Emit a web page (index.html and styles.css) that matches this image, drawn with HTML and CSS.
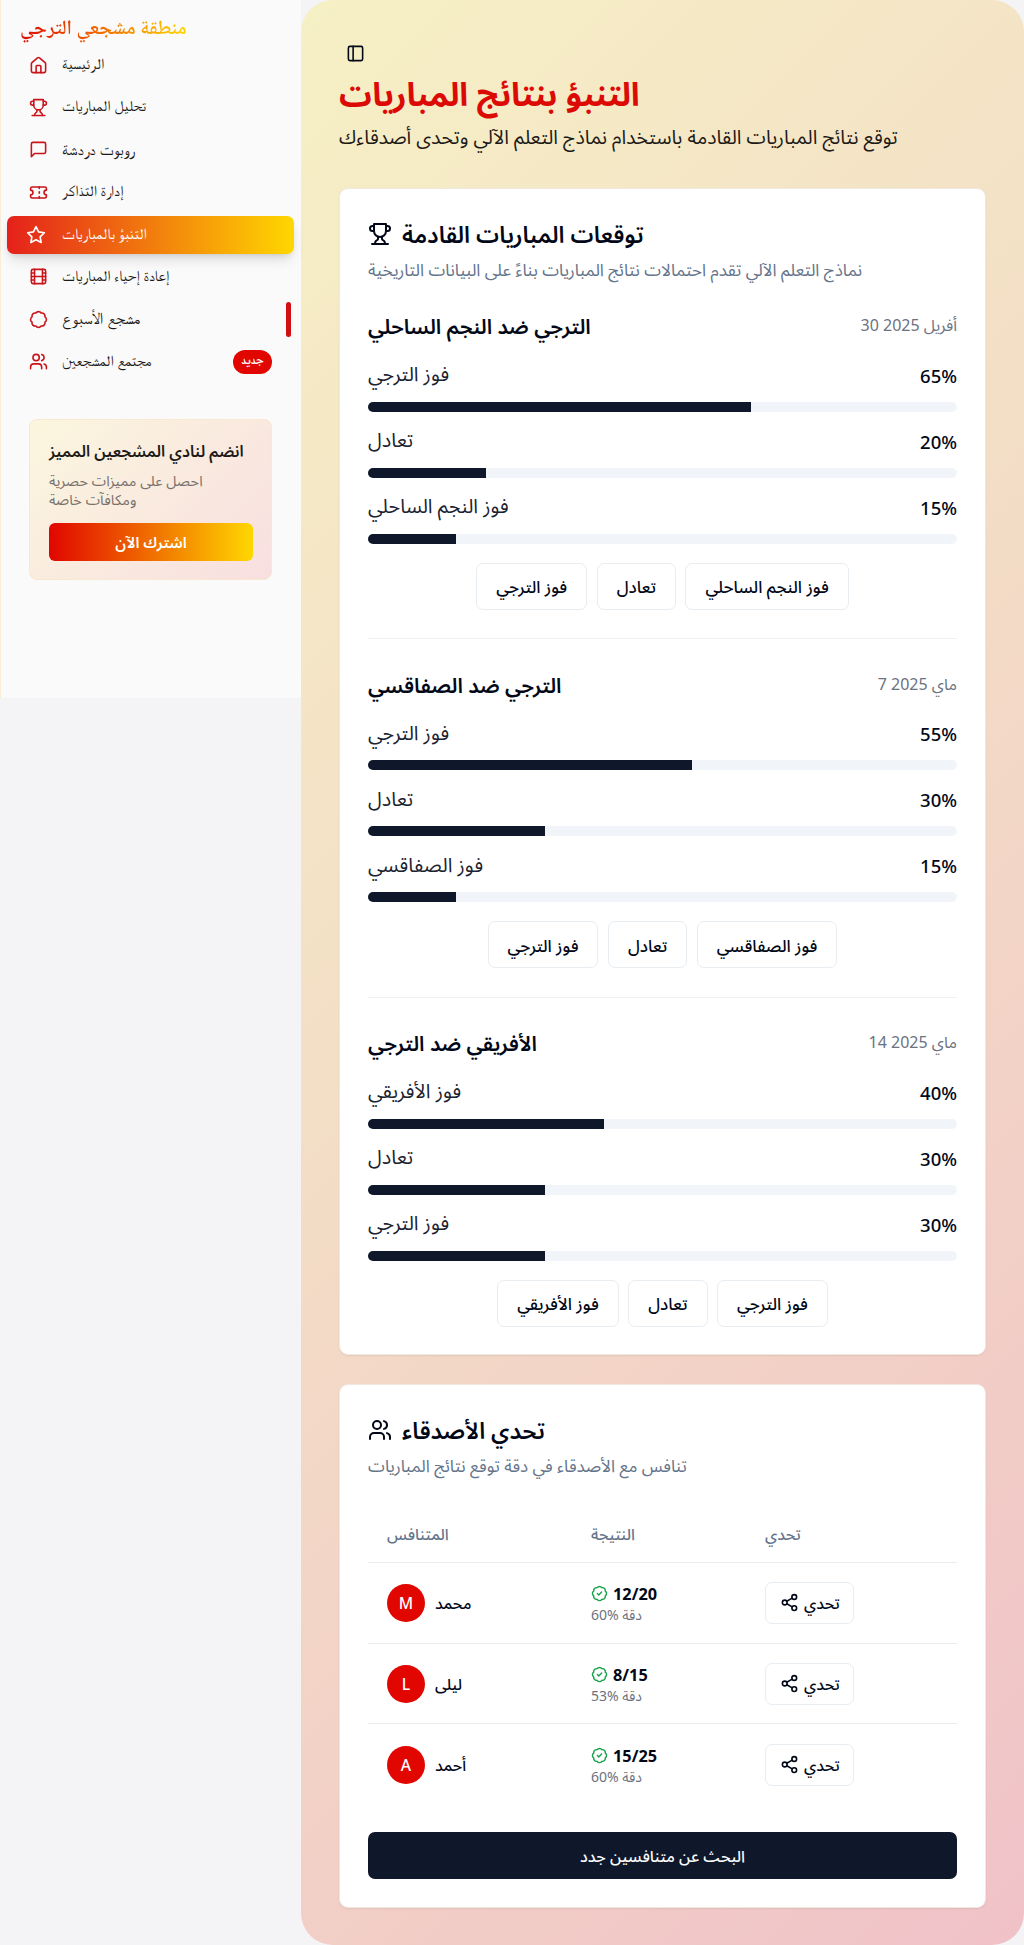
FILE: index.html
```html
<!DOCTYPE html>
<html lang="ar" dir="ltr">
<head>
<meta charset="utf-8">
<title>التنبؤ بنتائج المباريات</title>
<link rel="stylesheet" href="styles.css">
</head>
<body>
<svg class="sprite" aria-hidden="true">
  <symbol id="home" viewBox="0 0 24 24"><path d="M15 21v-8a1 1 0 0 0-1-1h-4a1 1 0 0 0-1 1v8"/><path d="M3 10a2 2 0 0 1 .709-1.528l7-5.999a2 2 0 0 1 2.582 0l7 5.999A2 2 0 0 1 21 10v9a2 2 0 0 1-2 2H5a2 2 0 0 1-2-2z"/></symbol>
  <symbol id="trophy" viewBox="0 0 24 24"><path d="M6 9H4.500a2.500 2.500 0 0 1 0-5H6"/><path d="M18 9h1.500a2.500 2.500 0 0 0 0-5H18"/><path d="M4 22h16"/><path d="M10 14.660V17c0 .55-.47.98-.97 1.210C7.850 18.750 7 20.240 7 22"/><path d="M14 14.660V17c0 .55.47.98.97 1.210C16.150 18.750 17 20.240 17 22"/><path d="M18 2H6v7a6 6 0 0 0 12 0V2Z"/></symbol>
  <symbol id="chat" viewBox="0 0 24 24"><path d="M21 15a2 2 0 0 1-2 2H7l-4 4V5a2 2 0 0 1 2-2h14a2 2 0 0 1 2 2z"/></symbol>
  <symbol id="ticket" viewBox="0 0 24 24"><path d="M2 9a3 3 0 0 1 0 6v2a2 2 0 0 0 2 2h16a2 2 0 0 0 2-2v-2a3 3 0 0 1 0-6V7a2 2 0 0 0-2-2H4a2 2 0 0 0-2 2Z"/><path d="M13 5v2"/><path d="M13 17v2"/><path d="M13 11v2"/></symbol>
  <symbol id="star" viewBox="0 0 24 24"><path d="m12 2 3.090 6.260L22 9.270l-5 4.870 1.180 6.880L12 17.770l-6.180 3.250L7 14.140 2 9.270l6.910-1.010z"/></symbol>
  <symbol id="film" viewBox="0 0 24 24"><rect width="18" height="18" x="3" y="3" rx="2"/><path d="M7 3v18M3 7.500h4M3 12h18M3 16.500h4M17 3v18M17 7.500h4M17 16.500h4"/></symbol>
  <symbol id="badge" viewBox="0 0 24 24"><path d="M3.850 8.620a4 4 0 0 1 4.780-4.770 4 4 0 0 1 6.740 0 4 4 0 0 1 4.780 4.780 4 4 0 0 1 0 6.740 4 4 0 0 1-4.770 4.780 4 4 0 0 1-6.750 0 4 4 0 0 1-4.780-4.770 4 4 0 0 1 0-6.760Z"/></symbol>
  <symbol id="badge-check" viewBox="0 0 24 24"><path d="M3.850 8.620a4 4 0 0 1 4.780-4.770 4 4 0 0 1 6.740 0 4 4 0 0 1 4.780 4.780 4 4 0 0 1 0 6.740 4 4 0 0 1-4.770 4.780 4 4 0 0 1-6.750 0 4 4 0 0 1-4.780-4.770 4 4 0 0 1 0-6.760Z"/><path d="m9 12 2 2 4-4"/></symbol>
  <symbol id="users" viewBox="0 0 24 24"><path d="M16 21v-2a4 4 0 0 0-4-4H6a4 4 0 0 0-4 4v2"/><circle cx="9" cy="7" r="4"/><path d="M22 21v-2a4 4 0 0 0-3-3.870"/><path d="M16 3.130a4 4 0 0 1 0 7.750"/></symbol>
  <symbol id="share" viewBox="0 0 24 24"><circle cx="18" cy="5" r="3"/><circle cx="6" cy="12" r="3"/><circle cx="18" cy="19" r="3"/><path d="m8.590 13.510 6.830 3.980M15.410 6.510l-6.820 3.980"/></symbol>
  <symbol id="panel" viewBox="0 0 24 24"><rect width="18" height="18" x="3" y="3" rx="2"/><path d="M9 3v18"/></symbol>
</svg>
<div class="layout">
  <aside class="sidebar">
    <div class="brand"><span>منطقة مشجعي الترجي</span></div>
    <nav class="nav">
      <a class="nav-item"><svg class="icon"><use href="#home"/></svg><span>الرئيسية</span></a>
      <a class="nav-item"><svg class="icon"><use href="#trophy"/></svg><span>تحليل المباريات</span></a>
      <a class="nav-item"><svg class="icon"><use href="#chat"/></svg><span class="wide">روبوت دردشة</span></a>
      <a class="nav-item"><svg class="icon"><use href="#ticket"/></svg><span>إدارة التذاكر</span></a>
      <a class="nav-item active"><svg class="icon"><use href="#star"/></svg><span>التنبؤ بالمباريات</span></a>
      <a class="nav-item"><svg class="icon"><use href="#film"/></svg><span>إعادة إحياء المباريات</span></a>
      <a class="nav-item"><svg class="icon"><use href="#badge"/></svg><span class="wide">مشجع الأسبوع</span><i class="marker"></i></a>
      <a class="nav-item"><svg class="icon"><use href="#users"/></svg><span>مجتمع المشجعين</span><b class="tag">جديد</b></a>
    </nav>
    <section class="promo">
      <h3>انضم لنادي المشجعين المميز</h3>
      <p>احصل على مميزات حصرية<br>ومكافآت خاصة</p>
      <button class="promo-btn">اشترك الآن</button>
    </section>
  </aside>
  <main class="main">
    <svg class="icon toggle"><use href="#panel"/></svg>
    <h1>التنبؤ بنتائج المباريات</h1>
    <p class="lead">توقع نتائج المباريات القادمة باستخدام نماذج التعلم الآلي وتحدى أصدقاءك</p>

    <section class="card matches">
      <h2><svg class="icon"><use href="#trophy"/></svg><span>توقعات المباريات القادمة</span></h2>
      <p class="desc">نماذج التعلم الآلي تقدم احتمالات نتائج المباريات بناءً على البيانات التاريخية</p>

      <article class="match">
        <header><h3>الترجي ضد النجم الساحلي</h3><time>30 أفريل 2025</time></header>
        <div class="row"><span>فوز الترجي</span><b>65%</b></div><div class="bar"><i style="width:65%"></i></div>
        <div class="row"><span>تعادل</span><b>20%</b></div><div class="bar"><i style="width:20%"></i></div>
        <div class="row"><span>فوز النجم الساحلي</span><b>15%</b></div><div class="bar"><i style="width:15%"></i></div>
        <div class="picks"><button>فوز الترجي</button><button>تعادل</button><button>فوز النجم الساحلي</button></div>
      </article>
      <article class="match">
        <header><h3>الترجي ضد الصفاقسي</h3><time>7 ماي 2025</time></header>
        <div class="row"><span>فوز الترجي</span><b>55%</b></div><div class="bar"><i style="width:55%"></i></div>
        <div class="row"><span>تعادل</span><b>30%</b></div><div class="bar"><i style="width:30%"></i></div>
        <div class="row"><span>فوز الصفاقسي</span><b>15%</b></div><div class="bar"><i style="width:15%"></i></div>
        <div class="picks"><button>فوز الترجي</button><button>تعادل</button><button>فوز الصفاقسي</button></div>
      </article>
      <article class="match">
        <header><h3>الأفريقي ضد الترجي</h3><time>14 ماي 2025</time></header>
        <div class="row"><span>فوز الأفريقي</span><b>40%</b></div><div class="bar"><i style="width:40%"></i></div>
        <div class="row"><span>تعادل</span><b>30%</b></div><div class="bar"><i style="width:30%"></i></div>
        <div class="row"><span>فوز الترجي</span><b>30%</b></div><div class="bar"><i style="width:30%"></i></div>
        <div class="picks"><button>فوز الأفريقي</button><button>تعادل</button><button>فوز الترجي</button></div>
      </article>
    </section>

    <section class="card friends">
      <h2><svg class="icon"><use href="#users"/></svg><span>تحدي الأصدقاء</span></h2>
      <p class="desc">تنافس مع الأصدقاء في دقة توقع نتائج المباريات</p>
      <div class="table">
        <div class="tr th"><span>المتنافس</span><span>النتيجة</span><span>تحدي</span></div>
        <div class="tr"><div class="who"><i class="avatar">M</i><span>محمد</span></div><div class="score"><div><svg class="icon"><use href="#badge-check"/></svg><b>12/20</b></div><small>60% دقة</small></div><div><button><svg class="icon"><use href="#share"/></svg><span>تحدي</span></button></div></div>
        <div class="tr"><div class="who"><i class="avatar">L</i><span>ليلى</span></div><div class="score"><div><svg class="icon"><use href="#badge-check"/></svg><b>8/15</b></div><small>53% دقة</small></div><div><button><svg class="icon"><use href="#share"/></svg><span>تحدي</span></button></div></div>
        <div class="tr"><div class="who"><i class="avatar">A</i><span>أحمد</span></div><div class="score"><div><svg class="icon"><use href="#badge-check"/></svg><b>15/25</b></div><small>60% دقة</small></div><div><button><svg class="icon"><use href="#share"/></svg><span>تحدي</span></button></div></div>
      </div>
      <button class="primary">البحث عن متنافسين جدد</button>
    </section>
  </main>
</div>
</body>
</html>
```
FILE: styles.css
```css
* { box-sizing: border-box; }
body { margin: 0; background: #f4f4f6; font-family: "Noto Sans", "Noto Sans Arabic", "DejaVu Sans", sans-serif; color: #020817; }
h1, h2, h3, p { margin: 0; white-space: nowrap; }
button { font: inherit; color: inherit; white-space: nowrap; }
b { font-weight: inherit; }
span, time { white-space: nowrap; }
.sprite { display: none; }
.icon { flex: none; width: 19px; height: 19px; fill: none; stroke: currentColor; stroke-width: 2; stroke-linecap: round; stroke-linejoin: round; }
.layout { display: flex; align-items: flex-start; height: 1945px; }

.sidebar { width: 301px; height: 698px; background: #fafafa; border-left: 1px solid #faeed8; flex: none; color: #1c1917; }
.brand { height: 44px; padding: 14px 0 0 19px; font: 600 20.200px/32px "Noto Naskh Arabic", "DejaVu Sans", serif; }
.brand span { background: linear-gradient(90deg, #e10600, #ffd700); background-clip: text; -webkit-background-clip: text; color: transparent; }
.nav { padding: 2px 7px 0 6px; display: grid; gap: 4.400px; font: 400 15.400px/38px "FreeSerif", "Noto Naskh Arabic", "DejaVu Sans", serif; }
.nav .wide { font-size: 16.800px; }
.nav-item { display: flex; align-items: center; height: 38px; padding-left: 22px; gap: 14px; position: relative; }
.nav-item .icon { color: #c8151b; }
.active { background: linear-gradient(90deg, #e4211b, #ffd700); border-radius: 7px; color: #fff; box-shadow: 0 8px 14px -3px #0002, 0 3px 6px -3px #0002; padding-left: 19px; gap: 16px; }
.active .icon { color: #fff; width: 20px; height: 20px; }
.marker { position: absolute; right: 3px; top: 2px; width: 5px; height: 35px; border-radius: 3px; background: #d01012; }
.tag { margin-left: auto; margin-right: 22px; width: 39px; height: 24px; border-radius: 12px; background: #e10600; color: #fff; font-size: 13px; font-weight: 700; line-height: 22px; text-align: center; }
.promo { margin: 38px 29px 0 28px; height: 161px; border: 1px solid #f9e8cf; border-radius: 8px; background: linear-gradient(135deg, #fbf6de, #f8dfe0); padding: 17px 19px; }
.promo h3 { font-size: 15.900px; line-height: 28px; font-weight: 600; }
.promo p { font-size: 14.500px; line-height: 19px; color: #78716c; margin-top: 6px; }
.promo-btn { display: block; width: 204px; height: 38px; margin-top: 14px; border: 0; border-radius: 6px; background: linear-gradient(90deg, #e10600, #ffd700); color: #fff; font-size: 15.200px; font-weight: 600; padding: 3px 0 0; }

.main { flex: 1; height: 1945px; padding: 42px 38px 38px; border-radius: 32px; background: linear-gradient(135deg, #f6f0c5, #f3dfc6 40%, #f2d0c6 70%, #f0c2c8); }
.toggle { display: block; margin: 2px 0 0 7px; }
h1 { color: #dc0a05; font-size: 32.500px; line-height: 44px; margin-top: 9px; font-weight: 700; }
.lead { font-size: 19.500px; line-height: 32px; margin-top: 5px; color: #1c1917; }
.card { background: #fff; border-radius: 9px; border: 1px solid #efe9e2; box-shadow: 0 1px 2px #0001; padding: 28px 28px 0; }
.matches { margin-top: 35px; height: 1167px; }
.friends { margin-top: 29px; height: 524px; }
h2 { display: flex; align-items: center; gap: 10px; font-size: 23px; line-height: 34px; font-weight: 600; }
h2 .icon { width: 24px; height: 24px; }
.desc { font-size: 17px; line-height: 24px; color: #64748b; margin-top: 7px; }
.match { height: 329px; margin-top: 27px; }
.match + .match { height: 358.500px; margin-top: 0; border-top: 1px solid #eef0f3; padding-top: 28.500px; }
.match header { display: flex; justify-content: space-between; align-items: center; height: 34px; }
.match h3 { font-size: 20.800px; line-height: 34px; font-weight: 600; }
time { font-size: 16px; color: #6b7280; }
.row { display: flex; justify-content: space-between; align-items: center; height: 28px; margin-top: 15.500px; font-size: 19.800px; color: #1b2230; }
.match header + .row { margin-top: 18px; }
.row b { font-size: 18.500px; font-weight: 500; color: #020817; }
.bar { height: 10px; margin-top: 12.500px; border-radius: 5px; background: #f1f5f9; overflow: hidden; }
.bar i { display: block; height: 100%; background: #0f172a; }
.picks { display: flex; justify-content: center; gap: 9.500px; margin-top: 19px; }
.picks button, .table button { height: 47px; padding: 3px 19px 0; border: 1px solid #e8edf2; border-radius: 7px; background: #fff; font-size: 16.800px; font-weight: 500; }
.table { margin-top: 28px; }
.tr { display: grid; grid-template-columns: 204px 174px 1fr; align-items: center; height: 80.700px; border-bottom: 1px solid #e8edf2; padding-left: 19px; font-weight: 500; font-size: 15.700px; }
.tr:last-child { border: 0; }
.th { height: 57px; padding-top: 2px; color: #64748b; }
.who { display: flex; align-items: center; gap: 10px; }
.who span { padding-top: 3px; }
.avatar { width: 38px; height: 38px; border-radius: 50%; background: #e10600; color: #fff; font-style: normal; display: grid; place-items: center; }
.score div { display: flex; align-items: center; gap: 5px; line-height: 24px; font-size: 16.300px; font-weight: 700; }
.score .icon { width: 17px; height: 17px; color: #16a34a; }
.score small { display: block; width: max-content; font-size: 14px; line-height: 18px; font-weight: 400; color: #6b7280; }
.table button { height: 42px; padding: 0 13px 0 14px; display: flex; align-items: center; gap: 5px; font-size: 15.700px; }
.table button span { padding-top: 3px; }
.primary { display: block; width: 100%; height: 47px; margin-top: 27px; padding: 3px 0 0; border: 0; border-radius: 7px; background: #0f172a; color: #f8fafc; font-size: 15.900px; font-weight: 500; }
```
